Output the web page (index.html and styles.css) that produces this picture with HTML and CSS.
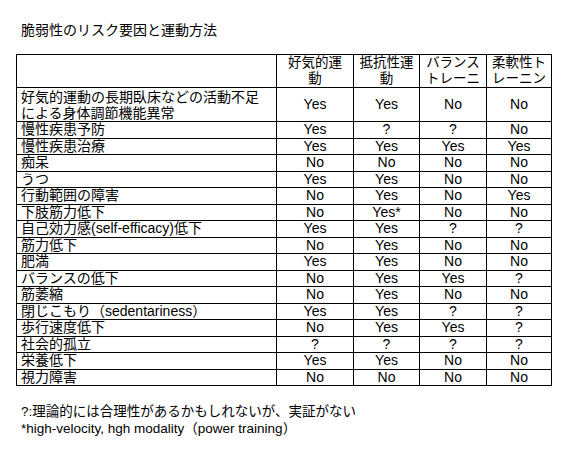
FILE: index.html
```html
<!DOCTYPE html>
<html lang="ja">
<head>
<meta charset="utf-8">
<title>脆弱性のリスク要因と運動方法</title>
<link rel="stylesheet" href="styles.css">
</head>
<body>
<h1 class="title">脆弱性のリスク要因と運動方法</h1>
<table class="grid">
  <colgroup>
    <col class="c-factor">
    <col class="c-aero">
    <col class="c-res">
    <col class="c-bal">
    <col class="c-flex">
  </colgroup>
  <thead>
    <tr class="head-row">
      <th></th>
      <th>好気的運動</th>
      <th>抵抗性運動</th>
      <th>バランストレーニ</th>
      <th>柔軟性トレーニン</th>
    </tr>
  </thead>
  <tbody>
    <tr class="tall-row"><td class="factor">好気的運動の長期臥床などの活動不足による身体調節機能異常</td><td>Yes</td><td>Yes</td><td>No</td><td>No</td></tr>
    <tr><td class="factor">慢性疾患予防</td><td>Yes</td><td>?</td><td>?</td><td>No</td></tr>
    <tr><td class="factor">慢性疾患治療</td><td>Yes</td><td>Yes</td><td>Yes</td><td>Yes</td></tr>
    <tr><td class="factor">痴呆</td><td>No</td><td>No</td><td>No</td><td>No</td></tr>
    <tr><td class="factor">うつ</td><td>Yes</td><td>Yes</td><td>No</td><td>No</td></tr>
    <tr><td class="factor">行動範囲の障害</td><td>No</td><td>Yes</td><td>No</td><td>Yes</td></tr>
    <tr><td class="factor">下肢筋力低下</td><td>No</td><td>Yes*</td><td>No</td><td>No</td></tr>
    <tr><td class="factor">自己効力感(self-efficacy)低下</td><td>Yes</td><td>Yes</td><td>?</td><td>?</td></tr>
    <tr><td class="factor">筋力低下</td><td>No</td><td>Yes</td><td>No</td><td>No</td></tr>
    <tr><td class="factor">肥満</td><td>Yes</td><td>Yes</td><td>No</td><td>No</td></tr>
    <tr><td class="factor">バランスの低下</td><td>No</td><td>Yes</td><td>Yes</td><td>?</td></tr>
    <tr><td class="factor">筋萎縮</td><td>No</td><td>Yes</td><td>No</td><td>No</td></tr>
    <tr><td class="factor">閉じこもり（sedentariness）</td><td>Yes</td><td>Yes</td><td>?</td><td>?</td></tr>
    <tr><td class="factor">歩行速度低下</td><td>No</td><td>Yes</td><td>Yes</td><td>?</td></tr>
    <tr><td class="factor">社会的孤立</td><td>?</td><td>?</td><td>?</td><td>?</td></tr>
    <tr><td class="factor">栄養低下</td><td>Yes</td><td>Yes</td><td>No</td><td>No</td></tr>
    <tr><td class="factor">視力障害</td><td>No</td><td>No</td><td>No</td><td>No</td></tr>
  </tbody>
</table>
<div class="notes">
  <p class="note">?:理論的には合理性があるかもしれないが、実証がない</p>
  <p class="note">*high-velocity, hgh modality（power training）</p>
</div>
</body>
</html>
```
FILE: styles.css
```css
html, body {
  margin: 0;
  padding: 0;
  background: #ffffff;
}

body {
  color: #000000;
  font-family: "Liberation Sans", "Noto Sans CJK JP", sans-serif;
  font-size: 14px;
  padding: 22px 0 0 16px;
}

.title {
  margin: 0 0 0 5px;
  font-size: 14px;
  font-weight: normal;
  line-height: 16px;
}

.grid {
  margin-top: 16px;
  border-collapse: collapse;
  table-layout: fixed;
  width: 535px;
  border: 1px solid #000;
}

.c-factor { width: 260px; }
.c-aero { width: 77px; }
.c-res { width: 66px; }
.c-bal { width: 67px; }
.c-flex { width: 65px; }

.grid th,
.grid td {
  border: 1px solid #000;
  padding: 0 4px;
  font-weight: normal;
  font-size: 14px;
  line-height: 15px;
  text-align: center;
  vertical-align: middle;
}

.grid tbody tr {
  height: 16.5px;
}

.grid td.factor {
  text-align: left;
  padding-left: 4px;
  white-space: nowrap;
}

.grid .tall-row {
  height: 34px;
}

.grid .tall-row td.factor {
  white-space: normal;
  padding-right: 8px;
  line-height: 16px;
}

.grid .head-row {
  height: 33px;
}

.grid .head-row th {
  font-size: 13.5px;
  line-height: 16px;
  padding: 0 5px;
}

.notes {
  margin: 17px 0 0 5px;
}

.note {
  margin: 0;
  font-size: 13.5px;
  line-height: 17px;
}
```
